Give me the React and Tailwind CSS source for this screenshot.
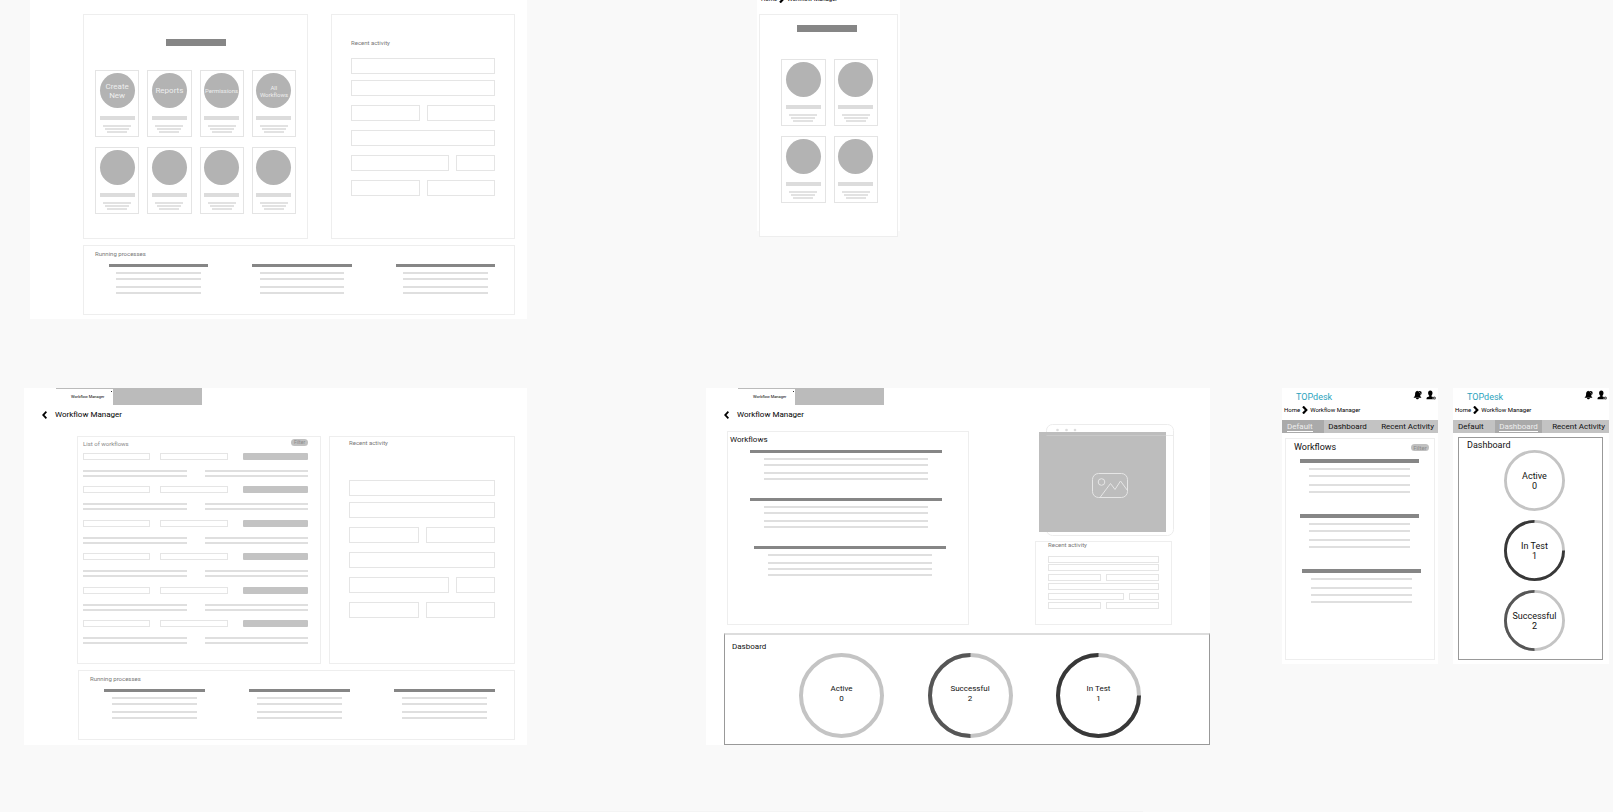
import clsx from "clsx";

const TOP_CARDS = [
  { label: "Create New", text: "text-[8px] leading-[9px]" },
  { label: "Reports", text: "text-[8px] leading-[9px]" },
  { label: "Permissions", text: "text-[6px] leading-[7px]" },
  { label: "All Workflows", text: "w-7 text-[6px] leading-[7px]" },
  {},
  {},
  {},
  {},
];

const ACTIVITY_ROWS = [
  ["flex-1"],
  ["flex-1"],
  ["flex-1", "flex-1"],
  ["flex-1"],
  ["flex-1", "w-[27%]"],
  ["flex-1", "flex-1"],
];

const RINGS = {
  active: { label: "Active", count: 0, share: 0, color: "#c4c4c4" },
  successful: { label: "Successful", count: 2, share: 50, color: "#565656" },
  inTest: { label: "In Test", count: 1, share: 75, color: "#383838" },
};

const TABS = ["Default", "Dashboard", "Recent Activity"];

/* ── Small pieces ── */

function Card({ label, text }) {
  return (
    <div className="border border-[#e4e4e4] pt-0.5 pb-[3px]">
      <div className="mx-auto flex size-[35px] items-center justify-center rounded-full bg-[#b3b3b3] text-center text-[#eeeeee]">
        {label && <span className={text}>{label}</span>}
      </div>
      <div className="mx-auto mt-2 h-1 w-[35px] bg-[#dcdcdc]" />
      <div className="mt-[5px] flex flex-col items-center gap-px">
        <div className="h-0.5 w-7 bg-[#e2e2e2]" />
        <div className="h-0.5 w-6 bg-[#e2e2e2]" />
        <div className="h-0.5 w-5 bg-[#e2e2e2]" />
      </div>
    </div>
  );
}

function LineGroup({ large, wideFirst, className }) {
  const gap = large ? "mt-[5px]" : "mt-1";
  const wide = large ? "mt-[7px]" : "mt-1.5";
  const line = "mx-auto h-0.5 w-[85%] bg-[#dfdfdf]";
  return (
    <div className={className}>
      <div className={clsx("bg-[#868686]", large ? "h-1" : "h-[3px]")} />
      <div className={clsx(line, "mt-[5px]")} />
      <div className={clsx(line, wideFirst ? wide : gap)} />
      <div className={clsx(line, wideFirst ? gap : wide)} />
      <div className={clsx(line, gap)} />
    </div>
  );
}

function ActivityBoxes({ small }) {
  const row = (cells, i) => (
    <div key={i} className={clsx("flex", small ? "h-[7px] gap-[5px]" : "h-4 gap-[7px]")}>
      {cells.map((width, j) => (
        <div key={j} className={clsx("border border-[#e5e5e5]", width)} />
      ))}
    </div>
  );
  return (
    <div className={clsx("flex flex-col", small ? "h-[53px] justify-between" : "gap-[9px]")}>
      <div className={clsx("flex flex-col", small ? "gap-px" : "gap-1.5")}>
        {ACTIVITY_ROWS.slice(0, 2).map(row)}
      </div>
      {ACTIVITY_ROWS.slice(2).map(row)}
    </div>
  );
}

function RunningProcesses() {
  return (
    <section className="border border-[#eeeeee] pt-1 pb-5">
      <h3 className="pl-[11px] text-[6px] leading-2 text-[#777777]">Running processes</h3>
      <div className="mt-1.5 grid grid-cols-3 gap-11 pr-[19px] pl-[25px]">
        <LineGroup />
        <LineGroup />
        <LineGroup />
      </div>
    </section>
  );
}

function Ring({ ring, small }) {
  const { label, count, share, color } = ring;
  return (
    <div className={clsx("grid place-items-center", small ? "size-[61px]" : "size-[85px]")}>
      <svg viewBox="0 0 85 85" className="size-full [grid-area:1/1]" fill="none" strokeWidth="4">
        <circle cx="42.5" cy="42.5" r="40.5" stroke="#c4c4c4" />
        {share > 0 && (
          <circle
            cx="42.5"
            cy="42.5"
            r="40.5"
            stroke={color}
            pathLength="100"
            strokeDasharray={`${share} 100`}
            transform={`rotate(${270 - share * 3.6} 42.5 42.5)`}
          />
        )}
      </svg>
      <div
        className={clsx(
          "text-center leading-[10px] text-[#111111] [grid-area:1/1]",
          small ? "text-[9px]" : "pb-[3px] text-[8px]"
        )}
      >
        <p>{label}</p>
        <p>{count}</p>
      </div>
    </div>
  );
}

function FilterButton({ className }) {
  return (
    <button
      type="button"
      className={clsx("flex h-[7px] items-center justify-center rounded-full bg-[#c0c0c0] text-[#8c8c8c]", className)}
    >
      Filter
    </button>
  );
}

function Breadcrumb({ className }) {
  return (
    <nav className={clsx("flex h-2 items-center pl-0.5 text-[6px] leading-2 text-black", className)}>
      <a href="#home">Home</a>
      <svg viewBox="0 0 6 8" className="mr-0.5 ml-0.5 h-2 w-1.5" fill="none" stroke="#000" strokeWidth="2.2">
        <path d="M1 .5 4.300 4 1 7.500" />
      </svg>
      <a href="#workflow-manager">Workflow Manager</a>
    </nav>
  );
}

function BoardHeader() {
  return (
    <header>
      <div className="flex pl-8">
        <div className="flex h-[17px] w-[57px] justify-between border-t border-[#bbbbbb] pl-[15px]">
          <span className="text-[4px] leading-[15px] whitespace-nowrap text-black">Workflow Manager</span>
          <span className="mt-0.5 mr-px size-px bg-[#333333]" />
        </div>
        <div className="h-[17px] w-[89px] bg-[#bbbbbb]" />
      </div>
      <div className="mt-[5px] flex h-2.5 items-center pl-[18px]">
        <button type="button" aria-label="Back">
          <svg viewBox="0 0 5 8" className="h-2 w-[5px]" fill="none" stroke="#000" strokeWidth="1.8">
            <path d="M4.4.7 1.2 4l3.2 3.3" />
          </svg>
        </button>
        <h2 className="ml-2 text-[8px] leading-[10px] text-black">Workflow Manager</h2>
      </div>
    </header>
  );
}

/* ── Desktop boards ── */

function HomeBoard() {
  return (
    <article className="col-start-2 bg-white pt-3.5 pr-3 pb-1 pl-[53px]">
      <div className="grid grid-cols-[225fr_184fr] gap-[23px]">
        <section className="border border-[#eeeeee] px-[11px] py-6">
          <div className="mx-auto h-[7px] w-15 bg-[#868686]" />
          <div className="mt-6 grid grid-cols-4 gap-x-2 gap-y-2.5">
            {TOP_CARDS.map((card, i) => (
              <Card key={i} {...card} />
            ))}
          </div>
        </section>
        <section className="border border-[#eeeeee] px-[19px] pt-6">
          <h3 className="mb-[11px] text-[6px] leading-2 text-[#777777]">Recent activity</h3>
          <ActivityBoxes />
        </section>
      </div>
      <div className="mt-1.5">
        <RunningProcesses />
      </div>
    </article>
  );
}

function ListBoard() {
  return (
    <article className="col-start-2 bg-white pb-[5px]">
      <BoardHeader />
      <div className="mt-4 grid grid-cols-[244fr_186fr] gap-2 pr-3 pl-[53px]">
        <section className="border border-[#eeeeee] pr-3 pb-[19px] pl-[5px]">
          <div className="flex justify-between pt-0.5">
            <h3 className="text-[6px] leading-[10px] text-[#888888]">List of workflows</h3>
            <FilterButton className="w-[17px] text-[5px]" />
          </div>
          <div className="mt-1 flex h-[191px] flex-col justify-between">
            {Array.from({ length: 6 }).map((_, i) => (
              <div key={i}>
                <div className="flex h-[7px]">
                  <div className="flex-1 border border-[#e5e5e5]" />
                  <div className="ml-2.5 flex-1 border border-[#e5e5e5]" />
                  <div className="ml-[15px] flex-1 rounded-[1px] bg-[#c3c3c3]" />
                </div>
                <div className="mt-2.5 grid grid-cols-2 gap-x-[18px] gap-y-[3px]">
                  <div className="h-0.5 bg-[#dfdfdf]" />
                  <div className="h-0.5 bg-[#dfdfdf]" />
                  <div className="h-0.5 bg-[#dfdfdf]" />
                  <div className="h-0.5 bg-[#dfdfdf]" />
                </div>
              </div>
            ))}
          </div>
        </section>
        <section className="border border-[#eeeeee] px-[19px] pt-0.5">
          <h3 className="mb-[33px] text-[6px] leading-2 text-[#777777]">Recent activity</h3>
          <ActivityBoxes />
        </section>
      </div>
      <div className="mt-1.5 pr-3 pl-[54px]">
        <RunningProcesses />
      </div>
    </article>
  );
}

function ImagePlaceholder() {
  return (
    <svg viewBox="0 0 135 112" className="w-full" fill="none">
      <rect x="7.5" y=".5" width="127" height="111" rx="6" stroke="#ececec" />
      <circle cx="18.5" cy="6" r="1.3" fill="#dddddd" />
      <circle cx="27.5" cy="6" r="1.3" fill="#dddddd" />
      <circle cx="36" cy="6" r="1.3" fill="#dddddd" />
      <path d="M127 11.5h7.5" stroke="#ececec" />
      <path d="M0 8h127v100H0z" fill="#bdbdbd" />
      <path d="M7.5 11.5H127" stroke="#c8c8c8" />
      <g stroke="#e6e6e6">
        <rect x="53.5" y="49.5" width="35" height="24" rx="6" />
        <circle cx="62.5" cy="58" r="3.3" />
        <path d="m61 73.500 10.500-14 4.500 6 5.500-8.500 7 9.500" />
      </g>
    </svg>
  );
}

function DashboardBoard() {
  return (
    <article className="col-start-4 bg-white">
      <BoardHeader />
      <div className="mt-1 grid grid-cols-[242fr_139fr] gap-[66px] pr-9 pl-[21px]">
        <section className="mt-[7px] border border-[#eeeeee] pt-[3px]">
          <h3 className="pl-0.5 text-[8px] leading-[10px] text-[#111111]">Workflows</h3>
          <div className="mt-[5px] flex flex-col gap-[18px]">
            <LineGroup className="mr-[26px] ml-[22px]" />
            <LineGroup className="mr-[26px] ml-[22px]" />
            <LineGroup className="mr-[22px] ml-[26px]" wideFirst />
          </div>
        </section>
        <div>
          <div className="pl-1">
            <ImagePlaceholder />
          </div>
          <section className="mt-[5px] mr-0.5 border border-[#eeeeee] px-3 pb-[15px]">
            <h3 className="mb-2 text-[6px] leading-[6px] text-[#777777]">Recent activity</h3>
            <ActivityBoxes small />
          </section>
        </div>
      </div>
      <section className="mt-2 ml-[18px] border border-t-2 border-[#999999] border-t-[#dddddd] pt-[7px] pb-1.5">
        <h3 className="pl-[7px] text-[8px] leading-[10px] text-[#111111]">Dasboard</h3>
        <div className="mt-px flex justify-between pr-[68px] pl-[74px]">
          <Ring ring={RINGS.active} />
          <Ring ring={RINGS.successful} />
          <Ring ring={RINGS.inTest} />
        </div>
      </section>
    </article>
  );
}

/* ── Mobile boards ── */

function MobileHome() {
  return (
    <article className="col-start-4 -mt-[5px] self-start bg-white px-0.5">
      <Breadcrumb />
      <section className="mt-[11px] -mb-1.5 border border-[#eeeeee] bg-white pt-2.5 pr-[19px] pb-[33px] pl-[21px]">
        <div className="ml-4 h-[7px] w-15 bg-[#868686]" />
        <div className="mt-[27px] grid grid-cols-2 gap-x-2 gap-y-2.5">
          <Card />
          <Card />
          <Card />
          <Card />
        </div>
      </section>
    </article>
  );
}

function MobileShell({ active, className, children }) {
  return (
    <article className={clsx("self-start bg-white pt-1 pb-1", className)}>
      <header className="flex h-2.5 items-center justify-between pr-0.5 pl-3.5">
        <span className="text-[9px] leading-[10px] text-[#2ba3bd]">TOPdesk</span>
        <div className="flex gap-1 pb-1">
          <button type="button" aria-label="Notifications">
            <svg viewBox="0 0 9 10" className="h-2.5 w-[9px]">
              <path d="M4.500.8C2.600 1.100 2.100 2.600 2.100 4.200 2.100 5.800 1.500 6.600.5 7.700h8C7.500 6.900 7.300 6 7.200 5z" />
              <path d="M2.900 8h3c-.2 1.800-2.800 1.800-3 0z" />
              <circle cx="6.600" cy="3" r="2.100" />
              <path d="M6.100 2.200 7.500 3.500" stroke="#fff" strokeWidth=".5" />
            </svg>
          </button>
          <button type="button" aria-label="Account">
            <svg viewBox="0 0 10 10" className="size-2.5">
              <path d="M4.300.5c1.500 0 2.200 1 2.200 2.400 0 1.200-.5 2.100-1 2.600v.9l1.500.6A2 2 0 0 0 7 9.300H.5c0-1.800.3-2.100 1.200-2.400l1.500-.5v-.9c-.6-.5-1.100-1.400-1.100-2.600C2.100 1.500 2.800.5 4.300.5z" />
              <circle cx="8.300" cy="8" r="1.500" fill="#333" />
              <circle cx="8.300" cy="8" r=".6" fill="#fff" />
            </svg>
          </button>
        </div>
      </header>
      <Breadcrumb className="mt-1" />
      <nav className="mt-1.5 grid grid-cols-[42fr_47fr_67fr] bg-[#c3c3c3] text-[8px] leading-[9px]">
        {TABS.map((tab) => (
          <button
            key={tab}
            type="button"
            className={clsx(
              "flex h-[13px] items-center whitespace-nowrap",
              tab === "Default" && "pl-[5px]",
              tab === "Dashboard" && "justify-center",
              tab === "Recent Activity" && "justify-end pr-1",
              tab === active ? "bg-[#aaaaaa] text-[#eeeeee]" : "text-[#111111]"
            )}
          >
            <span className={clsx("border-b", tab === active ? "border-white" : "border-transparent")}>{tab}</span>
          </button>
        ))}
      </nav>
      {children}
    </article>
  );
}

function MobileWorkflows() {
  return (
    <MobileShell active="Default" className="col-start-6">
      <section className="mx-[3px] mt-[5px] border border-[#eeeeee] pt-[3px] pb-14">
        <div className="flex items-center justify-between pr-[5px] pl-2">
          <h3 className="text-[9px] leading-[10px] text-[#111111]">Workflows</h3>
          <FilterButton className="w-[18px] text-[6px]" />
        </div>
        <div className="mt-[7px] flex flex-col gap-[21px]">
          <LineGroup large className="mr-[15px] ml-3.5" />
          <LineGroup large className="mr-[15px] ml-3.5" />
          <LineGroup large className="mr-[13px] ml-4" wideFirst />
        </div>
      </section>
    </MobileShell>
  );
}

function MobileDashboard() {
  return (
    <MobileShell active="Dashboard" className="col-start-8">
      <section className="mr-1.5 ml-[5px] mt-1 border border-[#999999] pt-0.5 pb-2">
        <h3 className="pl-2 text-[9px] leading-[10px] text-[#111111]">Dashboard</h3>
        <div className="flex flex-col items-center gap-[9px] pl-2">
          <Ring small ring={RINGS.active} />
          <Ring small ring={RINGS.inTest} />
          <Ring small ring={RINGS.successful} />
        </div>
      </section>
    </MobileShell>
  );
}

export default function App() {
  return (
    <main className="flex min-h-screen flex-col overflow-hidden bg-[#f9f9f9] font-['Roboto',sans-serif]">
      <div className="grid grid-cols-[30fr_497fr_230fr_143fr_713fr]">
        <HomeBoard />
        <MobileHome />
      </div>
      <div className="mt-[69px] grid grid-cols-[24fr_503fr_179fr_504fr_72fr_156fr_15fr_156fr_4fr]">
        <ListBoard />
        <DashboardBoard />
        <MobileWorkflows />
        <MobileDashboard />
      </div>
      {/* top edge of the next row */}
      <div className="mx-auto mt-auto h-px w-5/12 bg-[#f4f4f4]" />
    </main>
  );
}
